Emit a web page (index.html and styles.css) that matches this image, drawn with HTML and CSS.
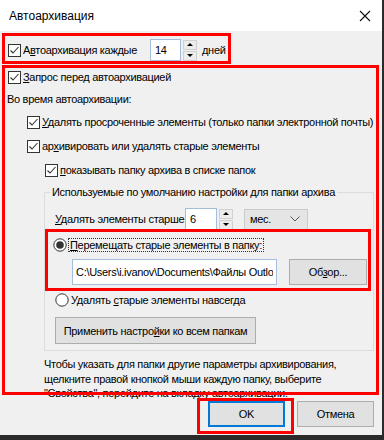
FILE: index.html
```html
<!DOCTYPE html>
<html lang="ru">
<head>
  <meta charset="UTF-8">
  <title>Автоархивация</title>
  <link rel="stylesheet" href="styles.css">
</head>
<body>
  <div class="window">
    <div class="titlebar">
      <span class="title">Автоархивация</span>
      <svg class="close" width="12" height="12" viewBox="0 0 12 12"><path d="M1 1L11 11M11 1L1 11" stroke="#111" stroke-width="1.1"/></svg>
    </div>

    <div class="body">
      <div class="row row-auto">
        <svg class="cb" viewBox="0 0 13 13"><rect x="0.5" y="0.5" width="12" height="12" fill="#fff" stroke="#333"/><path d="M2.5 6.5L5 9L10.5 3" fill="none" stroke="#333" stroke-width="1.1"/></svg>
        <span class="label label-auto">А<u>в</u>тоархивация каждые</span>
        <div class="spin spin-days">
          <input class="text" type="text" value="14">
          <div class="spin-btns"><span class="up"></span><span class="down"></span></div>
        </div>
        <span class="label">дней</span>
      </div>

      <div class="row row-ask">
        <svg class="cb" viewBox="0 0 13 13"><rect x="0.5" y="0.5" width="12" height="12" fill="#fff" stroke="#333"/><path d="M2.5 6.5L5 9L10.5 3" fill="none" stroke="#333" stroke-width="1.1"/></svg>
        <span class="label"><u>З</u>апрос перед автоархивацией</span>
      </div>

      <div class="row row-caption">Во время автоархивации:</div>

      <div class="row level-1 first">
        <svg class="cb" viewBox="0 0 13 13"><rect x="0.5" y="0.5" width="12" height="12" fill="#fff" stroke="#333"/><path d="M2.5 6.5L5 9L10.5 3" fill="none" stroke="#333" stroke-width="1.1"/></svg>
        <span class="label"><u>У</u>далять просроченные элементы (только папки электронной почты)</span>
      </div>
      <div class="row level-1">
        <svg class="cb" viewBox="0 0 13 13"><rect x="0.5" y="0.5" width="12" height="12" fill="#fff" stroke="#333"/><path d="M2.5 6.5L5 9L10.5 3" fill="none" stroke="#333" stroke-width="1.1"/></svg>
        <span class="label">ар<u>х</u>ивировать или удалять старые элементы</span>
      </div>
      <div class="row level-2">
        <svg class="cb" viewBox="0 0 13 13"><rect x="0.5" y="0.5" width="12" height="12" fill="#fff" stroke="#333"/><path d="M2.5 6.5L5 9L10.5 3" fill="none" stroke="#333" stroke-width="1.1"/></svg>
        <span class="label"><u>п</u>оказывать папку архива в списке папок</span>
      </div>

      <fieldset class="group">
        <legend>Используемые по умолчанию настройки для папки архива</legend>

        <div class="row row-older">
          <span class="label label-older"><u>У</u>далять элементы старше</span>
          <div class="spin spin-months">
            <input class="text" type="text" value="6">
            <div class="spin-btns"><span class="up"></span><span class="down"></span></div>
          </div>
          <div class="select">мес.<svg width="10" height="6" viewBox="0 0 10 6"><path d="M0.5 0.5L5 5L9.5 0.5" fill="none" stroke="#555"/></svg></div>
        </div>

        <div class="row row-move">
          <svg class="rb" viewBox="0 0 14 14"><circle cx="7" cy="7" r="6.2" fill="#fff" stroke="#333"/><circle cx="7" cy="7" r="3.8" fill="#333"/></svg>
          <span class="label focus"><u>П</u>еремещать старые элементы в папку:</span>
        </div>

        <div class="row row-path">
          <input class="text path" type="text" value="C:\Users\i.ivanov\Documents\Файлы Outlook\archive.pst">
          <button class="btn browse">Об<u>з</u>ор...</button>
        </div>

        <div class="row row-delete">
          <svg class="rb" viewBox="0 0 14 14"><circle cx="7" cy="7" r="6.2" fill="#fff" stroke="#333"/></svg>
          <span class="label">Удалять <u>с</u>тарые элементы навсегда</span>
        </div>

        <div class="row row-apply">
          <button class="btn apply">Применить настро<u>й</u>ки ко всем папкам</button>
        </div>
      </fieldset>

      <p class="note">Чтобы указать для папки другие параметры архивирования, щелкните правой кнопкой мыши каждую папку, выберите "Свойства", перейдите на вкладку автоархивации.</p>
    </div>

    <div class="footer">
      <button class="btn ok">OK</button>
      <button class="btn cancel">Отмена</button>
    </div>

    <!-- red annotation frames drawn over the dialog -->
    <div class="mark mark-top"></div>
    <div class="mark mark-main"></div>
    <div class="mark mark-move"></div>
    <div class="mark mark-ok"></div>
  </div>
</body>
</html>
```

FILE: styles.css
```css
/* page around the dialog */
body {
  margin: 0;
  background-color: #2b2b2b;
  font-family: "Liberation Sans", Arial, sans-serif;
  font-size: 11px;
  letter-spacing: -0.3px;
  color: #000;
}

.window {
  position: relative;
  width: 382px;
  height: 435px;
  background-color: #f0f0f0;
  display: flex;
  flex-direction: column;
  overflow: hidden;
}

/* title bar */
.titlebar {
  height: 31px;
  flex: none;
  background-color: #fff;
  display: flex;
  align-items: center;
  justify-content: space-between;
  padding: 0 11px 0 9px;
}

.title {
  font-size: 12px;
  letter-spacing: 0;
}

/* rows */
.body {
  display: flex;
  flex-direction: column;
}

.row {
  display: flex;
  align-items: center;
}

.cb {
  width: 13px;
  height: 13px;
  flex: none;
  margin-right: 2px;
}

.rb {
  width: 14px;
  height: 14px;
  flex: none;
  margin-right: 2px;
}

.label {
  white-space: nowrap;
}

u {
  text-underline-offset: 1px;
}

.row-auto {
  height: 24px;
  margin-top: 7px;
  padding-left: 8px;
}

.label-auto {
  width: 127px;
}

.row-ask {
  height: 24px;
  margin-top: 3px;
  padding-left: 8px;
}

.row-caption {
  height: 20px;
  padding-left: 7px;
}

.level-1 {
  height: 24px;
  padding-left: 27px;
}

.level-1.first {
  margin-top: 1px;
}

.level-2 {
  height: 24px;
  padding-left: 45px;
}

/* text boxes and spinners */
.text {
  box-sizing: border-box;
  height: 22px;
  border: 1px solid #a4bddb;
  background-color: #fff;
  font: inherit;
  letter-spacing: inherit;
  padding: 0 4px;
  outline: none;
}

.spin {
  display: flex;
  align-items: center;
}

.spin-days .text {
  width: 31px;
}

.spin-days {
  margin-right: 5px;
}

.spin-btns {
  display: flex;
  flex-direction: column;
  gap: 1px;
  margin-left: 2px;
}

.spin-btns span {
  width: 14px;
  height: 10px;
  box-sizing: border-box;
  border: 1px solid #d0d0d0;
  background-color: #ececec;
  display: flex;
  align-items: center;
  justify-content: center;
}

.spin-btns .up::before {
  content: "";
  border-left: 3px solid transparent;
  border-right: 3px solid transparent;
  border-bottom: 3px solid #000;
}

.spin-btns .down::before {
  content: "";
  border-left: 3px solid transparent;
  border-right: 3px solid transparent;
  border-top: 3px solid #000;
}

/* group box */
.group {
  margin: 2px 8px 0 44px;
  padding: 0;
  border: 1px solid #dcdcdc;
  height: 167px;
  min-width: 0;
  box-sizing: border-box;
}

.group legend {
  padding: 0 2px;
  margin-left: 5px;
  line-height: 16px;
  white-space: nowrap;
}

.row-older {
  height: 22px;
  margin-top: 8px;
  padding-left: 10px;
}

.label-older {
  width: 130px;
}

.spin-months .text {
  width: 32px;
}

.select {
  margin-left: 11px;
  width: 64px;
  height: 21px;
  box-sizing: border-box;
  border: 1px solid #cccccc;
  background-color: #e5e5e5;
  display: flex;
  align-items: center;
  justify-content: space-between;
  padding: 0 7px 0 5px;
}

.row-move {
  height: 16px;
  margin-top: 7px;
  padding-left: 8px;
}

.focus {
  outline: 1px dotted #333;
  outline-offset: 0;
  padding: 0 1px;
}

.row-path {
  margin-top: 6px;
  padding-left: 27px;
}

.text.path {
  width: 205px;
  height: 26px;
  padding: 0 3px;
}

.btn {
  box-sizing: border-box;
  border: 1px solid #adadad;
  background-color: #e1e1e1;
  font: inherit;
  letter-spacing: inherit;
  color: #000;
  padding: 0;
  white-space: nowrap;
}

.browse {
  width: 78px;
  height: 26px;
  margin-left: 12px;
}

.row-delete {
  height: 16px;
  margin-top: 7px;
  padding-left: 10px;
}

.row-apply {
  margin-top: 9px;
  padding-left: 10px;
}

.apply {
  width: 201px;
  height: 27px;
}

.note {
  margin: 6px 8px 0 44px;
  line-height: 14.5px;
}

/* bottom buttons */
.footer {
  margin-top: auto;
  height: 34px;
  flex: none;
  display: flex;
  justify-content: flex-end;
  gap: 12px;
  padding-right: 8px;
}

.footer .btn {
  width: 77px;
  height: 26px;
}

.ok {
  border: 1px solid #0078d7;
  box-shadow: inset 0 0 0 1px #0078d7;
}

/* red annotation frames */
.mark {
  position: absolute;
  border: 3px solid #ff0000;
  box-sizing: border-box;
}

.mark-top {
  left: 2px;
  top: 33px;
  width: 229px;
  height: 31px;
}

.mark-main {
  left: 2px;
  top: 65px;
  width: 377px;
  height: 330px;
}

.mark-move {
  left: 45px;
  top: 229px;
  width: 326px;
  height: 62px;
}

.mark-ok {
  left: 197px;
  top: 398px;
  width: 97px;
  height: 36px;
}
```
